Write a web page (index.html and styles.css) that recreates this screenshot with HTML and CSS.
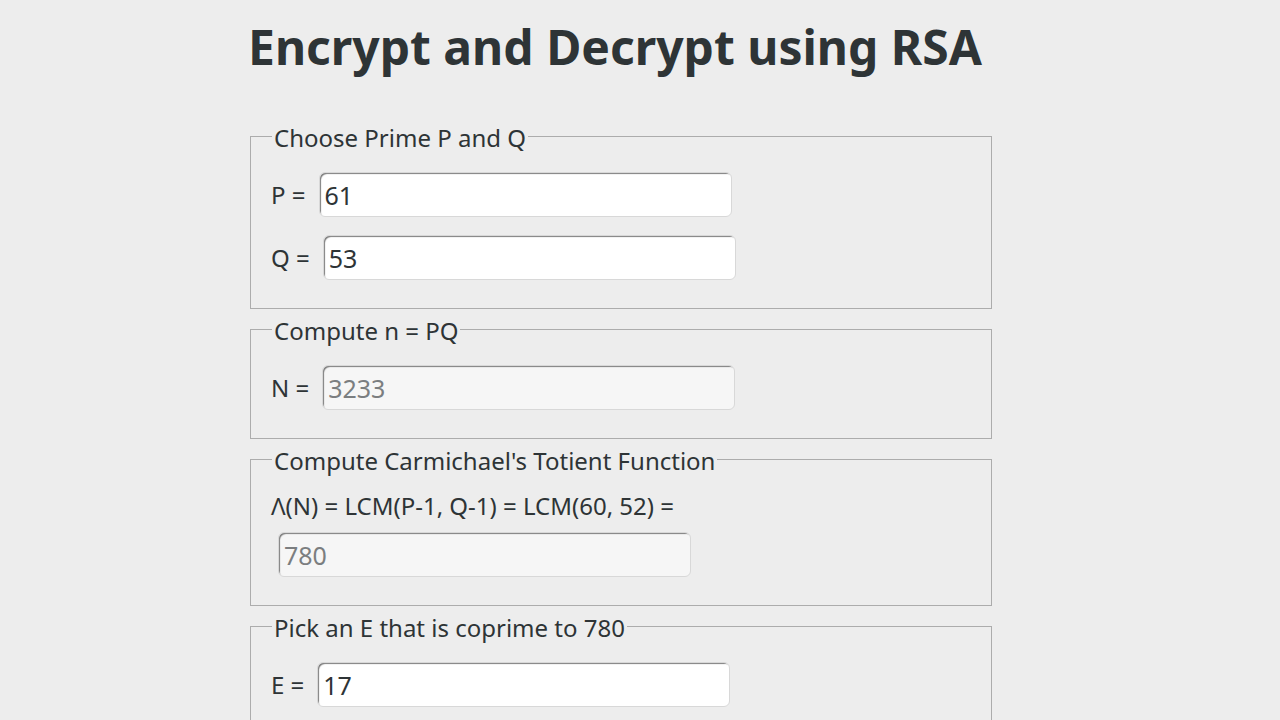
FILE: index.html
```html
<!DOCTYPE html>
<html lang="en">
<head>
    <meta charset="UTF-8">
    <title>RSA</title>
    <link rel="stylesheet" href="styles.css">
</head>
<body>
    <div id="wrapper">
        <h1>Encrypt and Decrypt using RSA</h1>

        <!-- Step 1: primes -->
        <fieldset>
            <legend>Choose Prime P and Q</legend>
            <div class="row">
                <label for="p">P =</label>
                <input type="text" id="p" value="61">
            </div>
            <div class="row">
                <label for="q">Q =</label>
                <input type="text" id="q" value="53">
            </div>
        </fieldset>

        <!-- Step 2: modulus -->
        <fieldset>
            <legend>Compute n = PQ</legend>
            <div class="row">
                <label for="n">N =</label>
                <input type="text" id="n" value="3233" readonly>
            </div>
        </fieldset>

        <!-- Step 3: totient -->
        <fieldset>
            <legend>Compute Carmichael's Totient Function</legend>
            <div class="formula">&#923;(N) = LCM(P-1, Q-1) = LCM(60, 52) =</div>
            <input type="text" id="lambda" class="wide" value="780" readonly>
        </fieldset>

        <!-- Step 4: public exponent -->
        <fieldset>
            <legend>Pick an E that is coprime to 780</legend>
            <div class="row">
                <label for="e">E =</label>
                <input type="text" id="e" value="17">
            </div>
        </fieldset>
    </div>
</body>
</html>
```

FILE: styles.css
```css
/* Page */
body {
    background-color: #ededed;
    color: #2e3436;
    font-family: "Noto Sans", sans-serif;
    font-size: 24px;
    margin: 0;
}

#wrapper {
    width: 744px;
    padding: 14px 0 0 248px;
}

h1 {
    font-size: 48px;
    font-weight: bold;
    margin: 0 0 40px 0;
}

/* Steps */
fieldset {
    border: 1px solid #acacac;
    margin: 0 0 3px 2px;
    padding: 19px 20px 28px 20px;
}

legend {
    margin-left: 1px;
    padding: 4px 2px 0 2px;
    line-height: 30px;
}

.row {
    display: flex;
    align-items: center;
    gap: 13px;
}

.row + .row {
    margin-top: 18px;
}

.formula {
    line-height: 24px;
    margin-top: -1px;
    margin-bottom: 14px;
}

/* Inputs */
input {
    width: 413px;
    height: 45px;
    box-sizing: border-box;
    padding: 0 5px;
    font-family: "Noto Sans", sans-serif;
    font-size: 25px;
    color: #2e3436;
    background-color: #fff;
    border: 1px solid #d8d8d8;
    border-radius: 6px;
    box-shadow: inset 2px 2px 1px -1px #7f7f7f;
    outline: none;
}

input[readonly] {
    background-color: #f6f6f6;
    color: #7b7e80;
}

input.wide {
    margin-left: 7px;
}
```
